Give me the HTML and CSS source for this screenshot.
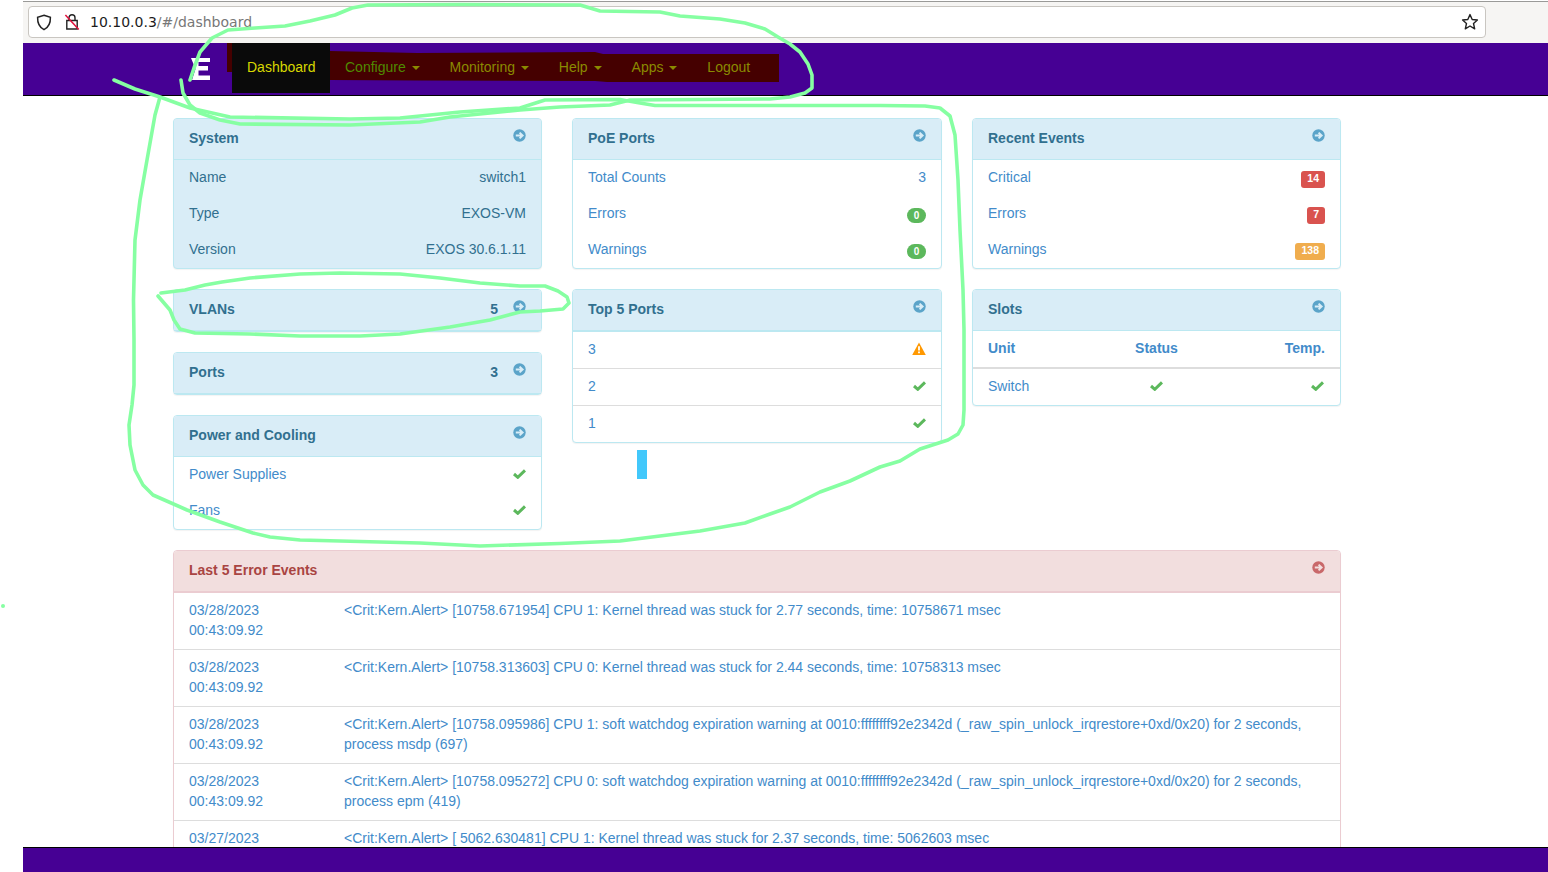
FILE: index.html
```html
<!DOCTYPE html>
<html lang="en">
<head>
<meta charset="utf-8">
<title>Dashboard</title>
<link rel="stylesheet" href="styles.css">
</head>
<body>
<svg class="defs" width="0" height="0" aria-hidden="true">
  <symbol id="go" viewBox="0 0 13 13">
    <circle cx="6.5" cy="6.5" r="6.2" fill="#5ba4c9"/>
    <path d="M2.8 6.500H9.400M6.600 3.600L9.600 6.500L6.600 9.400" fill="none" stroke="#d9edf7" stroke-width="2"/>
  </symbol>
  <symbol id="go-red" viewBox="0 0 13 13">
    <circle cx="6.5" cy="6.5" r="6.2" fill="#c9686a"/>
    <path d="M2.8 6.500H9.400M6.600 3.600L9.600 6.500L6.600 9.400" fill="none" stroke="#f2dede" stroke-width="2"/>
  </symbol>
  <symbol id="ok" viewBox="0 0 13 10">
    <path d="M1 5L4.800 8.300L12 1.400" fill="none" stroke="#5cb85c" stroke-width="3"/>
  </symbol>
  <symbol id="warn" viewBox="0 0 14 13">
    <path d="M7 0.400L13.800 13H0.200Z" fill="#ff9800"/>
    <path d="M6.100 4.200H7.900V8.400H6.100ZM6.100 9.600H7.900V11.200H6.100Z" fill="#fff"/>
  </symbol>
</svg>
<div class="frame">
  <header class="toolbar">
    <div class="urlbar">
      <svg class="ub-icon" width="16" height="17" viewBox="0 0 16 17"><path d="M8 1.200L14.400 3.200C14.600 9 12.400 13.400 8 15.600C3.600 13.400 1.400 9 1.600 3.200Z" fill="none" stroke="#222" stroke-width="1.5"/></svg>
      <svg class="ub-icon lock" width="16" height="18" viewBox="0 0 16 18"><path d="M5 7.500V4.800C5 3 6.300 1.800 8 1.800C9.700 1.800 11 3 11 4.800V7.500M2.800 7.500H13.200V16H2.800Z" fill="none" stroke="#222" stroke-width="1.4"/><path d="M1.400 2L14.800 16.600" stroke="#e0103c" stroke-width="1.5"/></svg>
      <span class="url"><span class="url-host">10.10.0.3</span>/#/dashboard</span>
      <svg class="star" width="18" height="18" viewBox="0 0 18 18"><path d="M9 1.600L11.200 6.500L16.400 7L12.500 10.500L13.700 15.800L9 13L4.300 15.800L5.500 10.500L1.600 7L6.800 6.500Z" fill="none" stroke="#222" stroke-width="1.4" stroke-linejoin="round"/></svg>
    </div>
  </header>
  <nav class="navbar">
    <svg class="scribble" width="560" height="42" viewBox="0 0 560 42"><path d="M0 0H103V8L190 10L368 9L376 11H552V39H380L368 38L190 37.500L103 37V29H0Z" fill="#450000"/></svg>
    <svg class="logo" width="23" height="24" viewBox="0 0 23 24"><path d="M2 1H21V5H9.500V9H19V13.500H9.500V18.500H21V23H3L6.500 12Z" fill="#fff"/></svg>
    <ul class="menu">
      <li class="menu-item active">Dashboard</li>
      <li class="menu-item green">Configure <span class="caret"></span></li>
      <li class="menu-item">Monitoring <span class="caret"></span></li>
      <li class="menu-item">Help <span class="caret"></span></li>
      <li class="menu-item">Apps <span class="caret"></span></li>
      <li class="menu-item">Logout</li>
    </ul>
  </nav>
  <main class="content">
    <div class="columns">
      <div class="col">
        <section class="panel filled">
          <div class="head"><span class="title">System</span><svg class="go"><use href="#go"/></svg></div>
          <div class="row"><span>Name</span><span>switch1</span></div>
          <div class="row"><span>Type</span><span>EXOS-VM</span></div>
          <div class="row"><span>Version</span><span>EXOS 30.6.1.11</span></div>
        </section>
        <section class="panel">
          <div class="head"><span class="title">VLANs</span><span class="count">5</span><svg class="go"><use href="#go"/></svg></div>
        </section>
        <section class="panel">
          <div class="head"><span class="title">Ports</span><span class="count">3</span><svg class="go"><use href="#go"/></svg></div>
        </section>
        <section class="panel">
          <div class="head"><span class="title">Power and Cooling</span><svg class="go"><use href="#go"/></svg></div>
          <div class="row"><span>Power Supplies</span><svg class="ok"><use href="#ok"/></svg></div>
          <div class="row"><span>Fans</span><svg class="ok"><use href="#ok"/></svg></div>
        </section>
      </div>
      <div class="col">
        <section class="panel">
          <div class="head"><span class="title">PoE Ports</span><svg class="go"><use href="#go"/></svg></div>
          <div class="row"><span>Total Counts</span><span>3</span></div>
          <div class="row"><span>Errors</span><span class="pill">0</span></div>
          <div class="row"><span>Warnings</span><span class="pill">0</span></div>
        </section>
        <section class="panel">
          <div class="head thick"><span class="title">Top 5 Ports</span><svg class="go"><use href="#go"/></svg></div>
          <div class="row ruled"><span>3</span><svg class="warn"><use href="#warn"/></svg></div>
          <div class="row ruled"><span>2</span><svg class="ok"><use href="#ok"/></svg></div>
          <div class="row ruled"><span>1</span><svg class="ok"><use href="#ok"/></svg></div>
        </section>
        <div class="loader"></div>
      </div>
      <div class="col">
        <section class="panel">
          <div class="head"><span class="title">Recent Events</span><svg class="go"><use href="#go"/></svg></div>
          <div class="row"><span>Critical</span><span class="tag red">14</span></div>
          <div class="row"><span>Errors</span><span class="tag red">7</span></div>
          <div class="row"><span>Warnings</span><span class="tag amber">138</span></div>
        </section>
        <section class="panel">
          <div class="head"><span class="title">Slots</span><svg class="go"><use href="#go"/></svg></div>
          <div class="slots slots-head"><span>Unit</span><span class="mid">Status</span><span class="end">Temp.</span></div>
          <div class="slots"><span>Switch</span><span class="mid"><svg class="ok"><use href="#ok"/></svg></span><span class="end"><svg class="ok"><use href="#ok"/></svg></span></div>
        </section>
      </div>
    </div>
    <section class="panel danger">
      <div class="head thick"><span class="title">Last 5 Error Events</span><svg class="go"><use href="#go-red"/></svg></div>
      <div class="event"><div>03/28/2023<br>00:43:09.92</div><div>&lt;Crit:Kern.Alert&gt; [10758.671954] CPU 1: Kernel thread was stuck for 2.77 seconds, time: 10758671 msec</div></div>
      <div class="event"><div>03/28/2023<br>00:43:09.92</div><div>&lt;Crit:Kern.Alert&gt; [10758.313603] CPU 0: Kernel thread was stuck for 2.44 seconds, time: 10758313 msec</div></div>
      <div class="event"><div>03/28/2023<br>00:43:09.92</div><div>&lt;Crit:Kern.Alert&gt; [10758.095986] CPU 1: soft watchdog expiration warning at 0010:ffffffff92e2342d (_raw_spin_unlock_irqrestore+0xd/0x20) for 2 seconds, process msdp (697)</div></div>
      <div class="event"><div>03/28/2023<br>00:43:09.92</div><div>&lt;Crit:Kern.Alert&gt; [10758.095272] CPU 0: soft watchdog expiration warning at 0010:ffffffff92e2342d (_raw_spin_unlock_irqrestore+0xd/0x20) for 2 seconds, process epm (419)</div></div>
      <div class="event"><div>03/27/2023<br>00:43:09.92</div><div>&lt;Crit:Kern.Alert&gt; [ 5062.630481] CPU 1: Kernel thread was stuck for 2.37 seconds, time: 5062603 msec</div></div>
    </section>
  </main>
  <footer class="footer"></footer>
</div>
<svg class="ink" width="1548" height="872" viewBox="0 0 1548 872" aria-hidden="true">
  <path d="M190 80L194 68L200 52L212 38L228 30L255 28L285 26L310 21L335 15L352 8L368 5L460 4.500L580 5L590 8L600 11L660 12L680 16L720 19L745 23L765 29L778 37L790 44L800 52L808 64L812 75L812 88L805 93L790 97L770 99L700 99.500L630 100L610 105L560 107L520 110L490 113L450 117L420 122L350 125L240 124L220 120L200 113L190 105L183 93L181 80"/>
  <path d="M114 80L135 89L160 97L190 108L230 117L350 119L400 118L460 112L520 108L545 100L620 99.500L640 103L655 105.500L880 105.500L925 106L940 108L950 116L955 135L958 180L960 230L963 290L964 330L964 410L963 425L958 434L948 440L920 449L900 461L880 467L850 481L820 492L790 507L770 514L745 523L700 531L660 536L620 541L560 543.500L480 546L420 543L300 540L270 537L253 533L220 522L187 510L153 495L143 485L135 470L130 445L129 425L132 405L134 385L134 340L133.500 300L135 240L140 200L147 160L155 115L160 97"/>
  <path d="M161 293L185 290L205 285L222 282L250 278L300 274L340 273L400 274L440 278L480 283L520 286L545 286L558 291L567 297L569 303L563 309L540 311L520 312L490 320L450 327L400 334L360 336L300 336L250 334L195 333L180 329L174 320L170 310L158 296"/>
  <circle cx="3" cy="606" r="2"/>
</svg>
</body>
</html>
```
FILE: styles.css
```css
* { box-sizing: border-box; }

html, body {
  margin: 0;
  height: 872px;
  overflow: hidden;
  background: #fff;
}

body {
  position: relative;
  font-family: "Liberation Sans", Arial, sans-serif;
  font-size: 14px;
  line-height: 20px;
  color: #428bca;
}

.defs { position: absolute; }

.frame {
  margin-left: 23px;
  height: 872px;
  display: flex;
  flex-direction: column;
}

/* browser chrome */
.toolbar {
  flex: none;
  height: 43px;
  margin-top: 1px;
  padding: 4px 62px 5px 5px;
  background: #f6f5f3;
  border-top: 1px solid #9a9a98;
  margin-bottom: -1px;
}

.urlbar {
  height: 32px;
  display: flex;
  align-items: center;
  background: #fff;
  border: 1px solid #c9c6c1;
  border-radius: 4px;
  padding: 0 6px 0 7px;
}

.ub-icon { flex: none; }
.lock { margin-left: 12px; }

.url {
  margin-left: 10px;
  font-family: "DejaVu Sans", sans-serif;
  font-size: 14px;
  color: #777;
}

.url-host { color: #1c1c1c; }
.star { margin-left: auto; }

/* nav */
.navbar {
  flex: none;
  position: relative;
  height: 53px;
  display: flex;
  background: #460094;
  border-bottom: 1px solid #000;
  padding-left: 150px;
}

.scribble {
  position: absolute;
  left: 204px;
  top: 0;
}

.logo {
  flex: none;
  margin: 14px 0 0 16px;
}

.menu {
  position: relative;
  display: flex;
  list-style: none;
  margin: 0 0 0 20px;
  padding: 0;
}

.menu-item {
  height: 50px;
  padding: 14px 15px;
  color: #8a8a00;
}

.menu-item.active { width: 98px; background: #0a0a0a; color: #d8d800; white-space: nowrap; }
.menu-item.green { color: #4f8a00; }

.caret {
  display: inline-block;
  width: 0;
  height: 0;
  margin-left: 2px;
  vertical-align: middle;
  border-top: 4px solid #8a8a00;
  border-left: 4px solid transparent;
  border-right: 4px solid transparent;
}

/* main */
.content {
  flex: 1;
  min-height: 0;
  overflow: hidden;
  padding: 22px 207px 0 150px;
}

.columns {
  display: grid;
  grid-template-columns: 369px 370px 369px;
  column-gap: 30px;
  margin-bottom: 20px;
}

.col {
  display: flex;
  flex-direction: column;
  gap: 20px;
  min-width: 0;
}

.panel {
  background: #fff;
  border: 1px solid #bce8f1;
  border-radius: 4px;
  box-shadow: 0 1px 1px rgba(0, 0, 0, .05);
}

.panel.filled { background: #d9edf7; color: #31708f; }

.head {
  display: flex;
  align-items: center;
  height: 41px;
  padding: 0 15px 2px;
  background: #d9edf7;
  border-bottom: 1px solid #bce8f1;
  border-radius: 3px 3px 0 0;
  color: #31708f;
  font-weight: 700;
  font-size: 14px;
}

.head.thick { height: 42px; border-bottom-width: 2px; }

.title { flex: 1; }
.count { margin-right: 15px; }

.go {
  flex: none;
  width: 13px;
  height: 13px;
  margin: -5px 0 0 0;
}

.row {
  display: flex;
  align-items: center;
  justify-content: space-between;
  height: 36px;
  padding: 0 15px;
}

.row > span:first-child,
.row > span:last-child { margin-top: -2px; }

.row.ruled { height: 37px; border-bottom: 1px solid #ddd; }
.row.ruled:last-child { height: 36px; border-bottom: 0; }

.ok {
  flex: none;
  width: 13px;
  height: 10px;
  margin-top: -2px;
}

.warn {
  flex: none;
  width: 14px;
  height: 13px;
  margin-top: -3px;
}

.pill, .tag {
  color: #fff;
  font-weight: 700;
  line-height: 15px;
  text-align: center;
}

.pill {
  width: 19px;
  height: 15px;
  font-size: 10px;
  border-radius: 8px;
  background: #5cb85c;
}

.tag {
  height: 17px;
  padding: 0 6px;
  font-size: 10.5px;
  border-radius: 3px;
}

.row > .pill:last-child,
.row > .tag:last-child { margin-top: 3px; }

.tag.red { background: #d9534f; }
.tag.amber { background: #f0ad4e; }

.slots {
  display: grid;
  grid-template-columns: 1fr 1fr 1fr;
  align-items: center;
  height: 36px;
  padding: 0 15px 2px;
}

.slots-head {
  height: 38px;
  padding-bottom: 2px;
  border-bottom: 2px solid #ddd;
  font-weight: 700;
}

.slots .mid { text-align: center; }
.slots .end { text-align: right; }
.slots .ok { display: inline-block; vertical-align: middle; margin-top: -2px; }
.slots .mid .ok { margin-left: 1px; }
.slots .end .ok { margin-right: 1px; }

.loader {
  width: 10px;
  height: 29px;
  margin: -13px 0 0 65px;
  background: #42c8fb;
}

.panel.danger { border-color: #ebccd1; }

.danger .head {
  background: #f2dede;
  border-bottom-color: #ebccd1;
  color: #a94442;
}

.event {
  display: grid;
  grid-template-columns: 155px 1fr;
  padding: 7px 15px 8px;
  height: 57px;
  border-top: 1px solid #ddd;
}

.event:nth-child(2) { border-top: 0; height: 56px; }

.footer {
  flex: none;
  height: 25px;
  background: #460094;
  border-top: 1px solid #000;
}

/* marker strokes drawn over the whole screenshot */
.ink {
  position: absolute;
  left: 0;
  top: 0;
  pointer-events: none;
  fill: none;
  stroke: #86ffa2;
  stroke-width: 3.6;
  stroke-linejoin: round;
  stroke-linecap: round;
}

.ink circle { fill: #86ffa2; stroke: none; }
```
